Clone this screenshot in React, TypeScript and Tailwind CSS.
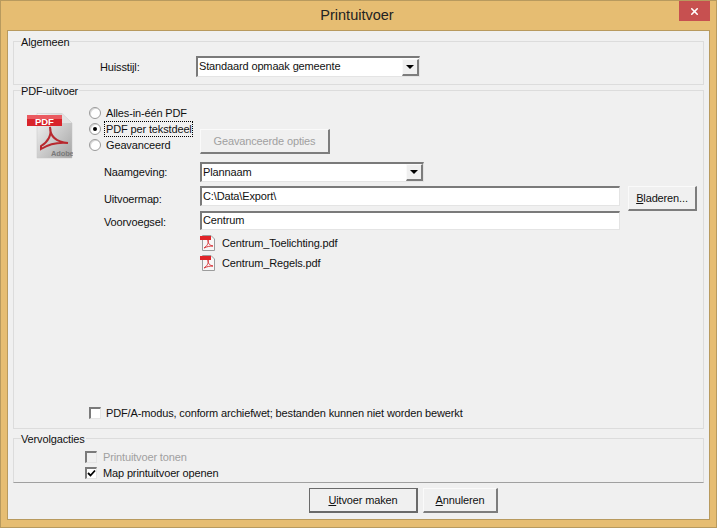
import type { ReactNode } from "react";
import { X } from "lucide-react";

const sunken = "border-t-2 border-l-2 border-b border-r border-t-[#7a7a7a] border-l-[#7a7a7a] border-b-[#e4e4e4] border-r-[#e4e4e4] bg-white";
const raised = "border-t border-l border-b-2 border-r-2 border-t-[#fafafa] border-l-[#fafafa] border-b-[#7d7d7d] border-r-[#7d7d7d]";

const PdfLarge = () => (
  <svg width="46" height="46" viewBox="0 0 46 46" className="shrink-0 mt-[8px]">
    <defs>
      <linearGradient id="page" x1="0" y1="0" x2="1" y2="1">
        <stop offset="0" stopColor="#f6f6f6" />
        <stop offset="1" stopColor="#a4a4a4" />
      </linearGradient>
    </defs>
    <path d="M10 0.500 H35 L45 10 V45 H10 Z" fill="url(#page)" stroke="#c4c4c4" strokeWidth="0.500" />
    <path d="M35 0.500 V10 H45 Z" fill="#e2e2e2" />
    <rect x="0" y="2" width="35" height="11" fill="#d8232a" />
    <rect x="0" y="2" width="35" height="4" fill="#ea5a60" />
    <text x="8" y="11.500" fontSize="9.500" fontWeight="700" fill="#fff" fontFamily="'Liberation Sans', sans-serif">PDF</text>
    <path d="M14 33 C21 29 25 22 23 14 C23 24 30 29 41 30 C31 29 22 31 14 36 Z" fill="none" stroke="#b8282e" strokeWidth="2" />
    <text x="24" y="43" fontSize="7.500" fontWeight="700" fill="#7a7a7a" fontFamily="'Liberation Sans', sans-serif">Adobe</text>
  </svg>
);

const PdfSmall = () => (
  <svg width="16" height="16" viewBox="0 0 16 16" className="shrink-0">
    <path d="M2.500 0.500 H11 L14.500 4 V15.500 H2.500 Z" fill="#f7f7f7" stroke="#9c9c9c" />
    <rect x="0" y="1" width="11" height="4" fill="#e02328" />
    <path d="M4 13 C7 11 9 8 8 5 C8 9 10 10.500 13 11 C10 11 7 11.500 4 13 Z" fill="none" stroke="#d8383d" />
  </svg>
);

const Group = ({ title, className, children }: { title: string; className: string; children: ReactNode }) => (
  <div className={`relative border border-[#dcdcdc] ${className}`}>
    <span className="absolute left-[7px] top-[-6px] bg-[#f0f0f0] pr-[1px] leading-[13px]">{title}</span>
    {children}
  </div>
);

const Select = ({ value, className }: { value: string; className: string }) => (
  <div className={`${sunken} flex items-center justify-between ${className}`}>
    <span className="pl-[1px] -mt-[1px]">{value}</span>
    <div className={`${raised} w-[17px] h-[17px] bg-[#f0f0f0] flex items-center justify-center`}>
      <div className="w-0 h-0 border-x-[4px] border-x-transparent border-t-[4px] border-t-black" />
    </div>
  </div>
);

const Radio = ({ label, checked, focus }: { label: string; checked?: boolean; focus?: boolean }) => (
  <div className="flex items-center h-[16px]">
    <div className="w-[12px] h-[12px] rounded-full border border-[#9a9a9a] bg-white flex items-center justify-center shadow-[inset_1px_1px_0_#d8d8d8]">
      {checked && <div className="w-[4px] h-[4px] rounded-full bg-black" />}
    </div>
    <span className={`ml-[4px] pl-[1px] leading-[14px] ${focus ? "outline-1 outline-dotted outline-black" : ""}`}>{label}</span>
  </div>
);

const Check = ({ label, checked, disabled, className, labelClass }: { label: string; checked?: boolean; disabled?: boolean; className?: string; labelClass: string }) => (
  <div className={`flex items-center ${className ?? ""}`}>
    <div className={`w-[12px] h-[12px] border-t-2 border-l-2 border-b border-r border-t-[#7a7a7a] border-l-[#7a7a7a] border-b-[#e4e4e4] border-r-[#e4e4e4] flex items-center justify-center ${disabled ? "bg-[#f0f0f0]" : "bg-white"}`}>
      {checked && (
        <svg width="9" height="9" viewBox="0 0 9 9">
          <path d="M1 4 L3.500 6.500 L8 1.500" fill="none" stroke="#000" strokeWidth="1.800" />
        </svg>
      )}
    </div>
    <span className={`${labelClass} ${disabled ? "text-[#a0a0a0]" : ""}`}>{label}</span>
  </div>
);

const Row = ({ label, labelClass, className, children }: { label: string; labelClass: string; className?: string; children: ReactNode }) => (
  <div className={`flex items-start ${className ?? ""}`}>
    <span className={`w-[96px] shrink-0 ${labelClass}`}>{label}</span>
    {children}
  </div>
);

export default function App() {
  return (
    <div className="w-[717px] h-[528px] box-border bg-[#e6bd72] border border-[#b89a5e] flex flex-col text-[11px] tracking-[-0.14px] text-[#111] font-['Liberation_Sans',sans-serif] overflow-hidden">
      {/* Titelbalk */}
      <div className="relative h-[29px] shrink-0 flex items-center justify-center pt-[1px] pr-[3px] text-[14.500px] tracking-normal text-[#222]">
        Printuitvoer
        <div className="absolute right-[6px] top-0 w-[31px] h-[20px] bg-[#c75050] flex items-center justify-center">
          <X size={11} strokeWidth={3.500} color="#fff" />
        </div>
      </div>

      {/* Inhoud */}
      <div className="mx-[6px] h-[490px] border border-[#b89a5e] bg-[#f0f0f0] px-[5px] pt-[10px] flex flex-col">
        <Group title="Algemeen" className="h-[44px] pl-[86px] pt-[14px] flex items-start">
          <span className="w-[96px] mt-[3px]">Huisstijl:</span>
          <Select value="Standaard opmaak gemeente" className="w-[224px] h-[21px]" />
        </Group>

        <Group title="PDF-uitvoer" className="mt-[5px] h-[339px] flex flex-col">
          <div className="flex flex-1 pl-[13px] pt-[14px]">
            <PdfLarge />
            <div className="flex-1 pl-[16px] pr-[6px]">
              <Radio label="Alles-in-één PDF" />
              <Radio label="PDF per tekstdeel" checked focus />
              <div className="relative">
                <Radio label="Geavanceerd" />
                <div className={`${raised} absolute left-[111px] top-[-8px] w-[130px] h-[25px] flex items-center justify-center text-[#a0a0a0] bg-[#f0f0f0]`}>
                  Geavanceerde opties
                </div>
              </div>
              <div className="pl-[15px]">
                <Row label="Naamgeving:" labelClass="mt-[2px]" className="mt-[9px]">
                  <Select value="Plannaam" className="w-[224px] h-[20px]" />
                </Row>
                <Row label="Uitvoermap:" labelClass="mt-[5px]" className="mt-[4px]">
                  <div className={`${sunken} w-[420px] h-[20px] pl-[1px] flex items-center`}>C:\Data\Export\</div>
                  <div className={`${raised} ml-[8px] w-[69px] h-[25px] flex items-center justify-center`}>
                    <span><span className="underline">B</span>laderen...</span>
                  </div>
                </Row>
                <Row label="Voorvoegsel:" labelClass="mt-[3px]">
                  <div className={`${sunken} w-[420px] h-[19px] pl-[1px] pb-[1px] flex items-center`}>Centrum</div>
                </Row>
                <div className="pl-[96px] mt-[4px] flex flex-col gap-[4px]">
                  <div className="flex items-center gap-[6px] h-[16px]"><PdfSmall /><span className="pt-[2px]">Centrum_Toelichting.pdf</span></div>
                  <div className="flex items-center gap-[6px] h-[16px]"><PdfSmall /><span className="pt-[2px]">Centrum_Regels.pdf</span></div>
                </div>
              </div>
            </div>
          </div>
          <Check label="PDF/A-modus, conform archiefwet; bestanden kunnen niet worden bewerkt" labelClass="ml-[5px]" className="pl-[75px] mb-[8px] h-[14px]" />
        </Group>

        <Group title="Vervolgacties" className="mt-[9px] h-[45px] border-b-[#a0a0a0] pl-[71px] pt-[12px] flex flex-col gap-[4px]">
          <Check label="Printuitvoer tonen" labelClass="ml-[6px]" disabled className="h-[12px]" />
          <Check label="Map printuitvoer openen" labelClass="ml-[6px]" checked className="h-[12px]" />
        </Group>

        <div className="mt-[5px] flex gap-[5px] pl-[296px]">
          <div className={`${raised} !border-t-[#6a6a6a] !border-l-[#6a6a6a] !border-b-[#6a6a6a] !border-r-[#6a6a6a] w-[109px] h-[25px] flex items-center justify-center`}>
            <span><span className="underline">U</span>itvoer maken</span>
          </div>
          <div className={`${raised} w-[75px] h-[25px] flex items-center justify-center`}>
            <span><span className="underline">A</span>nnuleren</span>
          </div>
        </div>
      </div>
    </div>
  );
}
